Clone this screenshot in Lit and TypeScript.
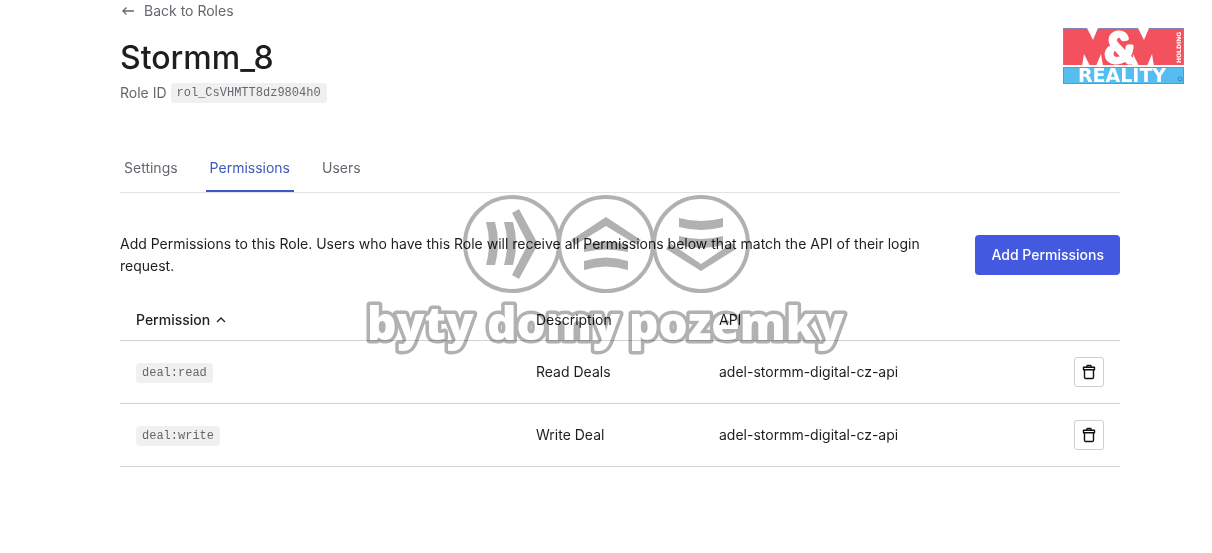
import { LitElement, html, svg, css } from "lit";
import { customElement, property } from "lit/decorators.js";

interface Permission {
  name: string;
  description: string;
  api: string;
}

const PERMISSIONS: Permission[] = [
  { name: "deal:read", description: "Read Deals", api: "adel-stormm-digital-cz-api" },
  { name: "deal:write", description: "Write Deal", api: "adel-stormm-digital-cz-api" },
];

const TABS = ["Settings", "Permissions", "Users"];

const trashIcon = svg`
  <svg width="16" height="16" viewBox="0 0 16 16" fill="none" stroke="#111" stroke-width="1.4" stroke-linejoin="round" stroke-linecap="round" aria-hidden="true">
    <path d="M2.500 3.300h11v2.500h-11z" />
    <path d="M3.500 5.800v7.400a1.300 1.300 0 0 0 1.300 1.300h6.400a1.300 1.300 0 0 0 1.300-1.300V5.800" />
    <path d="M5.600 3.200l.6-1.700h3.600l.6 1.700" />
  </svg>`;

@customElement("brand-logo")
export class BrandLogo extends LitElement {
  static styles = css`
    :host { display: block; }
    .logo { display: block; width: 122px; height: 57px; }
    .amp { font: 900 42px Lato, sans-serif; }
    .reality { font: bold 19px "DejaVu Sans", sans-serif; }
    .holding { font: bold 6px "DejaVu Sans", sans-serif; }
  `;

  render() {
    return html`
      <svg class="logo" viewBox="0 0 122 57" role="img" aria-label="M&amp;M Reality Holding">
        <rect x="1.5" y="0.5" width="120" height="37" fill="#f4515f" stroke="#8a86b4" />
        <path d="M25 0h11l-5 12zM76 0h11l-5 12z" fill="#fff" />
        <path d="M20 38l2-12 6 12zM34 38l5-12 2 12zM70 38l1-12 6 12zM85 38l5-12 2 12z" fill="#fff" />
        <text class="amp" x="58" y="35" text-anchor="middle" fill="#fff" stroke="#fff" stroke-width="3" stroke-linejoin="round">&amp;</text>
        <text class="holding" transform="translate(119 35) rotate(-90)" fill="#fff">HOLDING</text>
        <rect x="1" y="37" width="121" height="3" fill="#fff" />
        <rect x="1.5" y="39.5" width="120" height="16" fill="#55bdf0" stroke="#6f93b8" />
        <text class="reality" x="60" y="54" text-anchor="middle" fill="#fff">REALITY</text>
        <circle cx="118" cy="51" r="2" fill="none" stroke="#3f86c4" />
      </svg>
    `;
  }
}

@customElement("page-watermark")
export class PageWatermark extends LitElement {
  static styles = css`
    :host { display: block; }
    .mark { display: block; width: 488px; height: 166px; overflow: visible; }
    .words { font: 800 46px "Open Sans", sans-serif; }
  `;

  render() {
    return html`
      <svg class="mark" viewBox="361 192 488 166" aria-hidden="true">
        <g fill="none" stroke="#b1b1b1" stroke-width="4">
          <circle cx="511" cy="244" r="47" />
          <circle cx="605" cy="244" r="47" />
          <circle cx="700" cy="244" r="47" />
        </g>
        <g fill="#b1b1b1">
          <path d="M485 222h9q6 21 0 43h-9q6-22 0-43z" />
          <path d="M503 222h9q6 21 0 43h-9q6-22 0-43z" />
          <path d="M511 213l7-4 19 35-19 35-7-4 16-31z" />
          <path d="M570 240l35-23 35 23-4 5-31-19-31 19z" />
          <path d="M583 245q22-7 44 0v7q-22-5-44 0z" />
          <path d="M583 261q22-7 44 0v9q-22-7-44 0z" />
          <path d="M678 218q22 6 44 0v9q-22 6-44 0z" />
          <path d="M678 236q22 6 44 0v9q-22 6-44 0z" />
          <path d="M665 249l4-6 31 21 31-21 4 6-35 22z" />
        </g>
        <g class="words" fill="#fff" stroke="#b1b1b1" stroke-width="7" stroke-linejoin="round" paint-order="stroke">
          <text x="366" y="340">byty</text>
          <text x="486" y="340">domy</text>
          <text x="628" y="340">pozemky</text>
        </g>
      </svg>
    `;
  }
}

@customElement("permission-table")
export class PermissionTable extends LitElement {
  @property({ attribute: false }) rows: Permission[] = [];

  static styles = css`
    :host { display: block; }
    .table { width: 100%; border-collapse: collapse; table-layout: fixed; }
    th, td { box-sizing: border-box; padding: 0 16px; text-align: left; border-bottom: 1px solid #d2d2d2; }
    th { height: 39px; font-weight: 400; }
    td { height: 63px; }
    .name { width: 40%; }
    .description { width: 18.3%; }
    .actions { width: 62px; }
    .sort { display: inline-flex; align-items: center; gap: 6px; padding: 0; border: 0; background: none; font: inherit; font-weight: 500; color: inherit; }
    .code { display: inline-block; vertical-align: middle; padding: 0 6px; border-radius: 4px; background: #f0f0f0; color: #65676e; font: 12px/20px "Liberation Mono", monospace; }
    .cell-action { padding: 0 16px 0 0; }
    .delete { display: flex; align-items: center; justify-content: center; width: 30px; height: 30px; margin-left: auto; padding: 0; border: 1px solid #d0d0d0; border-radius: 3px; background: #fff; }
  `;

  render() {
    return html`
      <table class="table">
        <thead>
          <tr>
            <th class="name" aria-sort="ascending">
              <button class="sort" type="button">
                Permission
                <svg width="10" height="6" viewBox="0 0 10 6" fill="none" stroke="#222" stroke-width="1.3" aria-hidden="true"><path d="M1 5l4-4 4 4" /></svg>
              </button>
            </th>
            <th class="description">Description</th>
            <th>API</th>
            <th class="actions"></th>
          </tr>
        </thead>
        <tbody>
          ${this.rows.map(
            (row) => html`
              <tr>
                <td><code class="code">${row.name}</code></td>
                <td>${row.description}</td>
                <td>${row.api}</td>
                <td class="cell-action">
                  <button class="delete" type="button" aria-label="Remove ${row.name}">${trashIcon}</button>
                </td>
              </tr>
            `
          )}
        </tbody>
      </table>
    `;
  }
}

@customElement("app-root")
export class AppRoot extends LitElement {
  static styles = css`
    :host { display: block; position: relative; min-height: 100vh; overflow: hidden; background: #fff; color: #1e1e1e; font: 14px/22px Inter, sans-serif; }
    .page { padding: 0 92px 32px 120px; }
    .back { display: inline-flex; align-items: center; gap: 8px; color: #65676e; text-decoration: none; }
    .title { margin: 13px 0 0; font-size: 32px; line-height: 40px; font-weight: 500; }
    .role { display: flex; align-items: center; gap: 4px; margin-top: 4px; color: #65676e; }
    .code { padding: 0 6px; border-radius: 4px; background: #f0f0f0; font: 12px/20px "Liberation Mono", monospace; }
    .tabs { display: flex; gap: 24px; margin-top: 40px; border-bottom: 1px solid #e3e3e3; }
    .tab { padding: 13px 4px 11px; border-bottom: 2px solid transparent; line-height: 22px; color: #65676e; text-decoration: none; }
    .tab.active { color: #3f59b8; border-color: #4358c8; }
    .intro { display: flex; align-items: center; justify-content: space-between; gap: 40px; margin: 40px 0 24px; }
    .text { flex: 1; max-width: 815px; margin: 0; }
    .add { height: 40px; padding: 0 16px; border: 0; border-radius: 4px; background: #4359df; color: #fff; font: 500 14px/22px Inter, sans-serif; white-space: nowrap; }
    .logo { position: absolute; top: 28px; right: 28px; }
    .watermark { position: absolute; top: 192px; left: 50%; transform: translateX(-50%); pointer-events: none; mix-blend-mode: multiply; }
  `;

  render() {
    return html`
      <main class="page">
        <a class="back" href="#roles">
          <svg width="16" height="16" viewBox="0 0 16 16" fill="none" stroke="#65676e" stroke-width="1.3" aria-hidden="true"><path d="M14 8H3M6.500 4.500L3 8l3.500 3.500" /></svg>
          Back to Roles
        </a>
        <h1 class="title">Stormm_8</h1>
        <div class="role">Role ID <code class="code">rol_CsVHMTT8dz9804h0</code></div>
        <nav class="tabs">
          ${TABS.map((tab) => html`<a class="tab ${tab === "Permissions" ? "active" : ""}" href="#${tab.toLowerCase()}">${tab}</a>`)}
        </nav>
        <section class="intro">
          <p class="text">Add Permissions to this Role. Users who have this Role will receive all Permissions below that match the API of their login request.</p>
          <button class="add" type="button">Add Permissions</button>
        </section>
        <permission-table .rows=${PERMISSIONS}></permission-table>
      </main>
      <brand-logo class="logo"></brand-logo>
      <page-watermark class="watermark"></page-watermark>
    `;
  }
}
